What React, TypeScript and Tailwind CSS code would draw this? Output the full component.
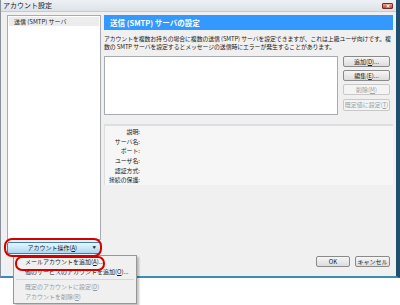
import React from "react";

const font = { fontFamily: '"Noto Sans CJK JP", "Noto Sans", sans-serif' };

function Btn({ children, disabled, className = "" }: { children: React.ReactNode; disabled?: boolean; className?: string }) {
  return (
    <div
      className={
        "flex items-center justify-center rounded-[2px] border text-[6px] leading-none " +
        (disabled
          ? "border-[#c8c8c8] bg-[#f4f4f4] text-[#a0a0a0] "
          : "border-[#8a8a8a] bg-gradient-to-b from-[#f6f6f6] to-[#dcdcdc] text-[#222] ") +
        className
      }
    >
      {children}
    </div>
  );
}

export default function App() {
  const labels = ["説明:", "サーバ名:", "ポート:", "ユーザ名:", "認証方式:", "接続の保護:"];
  return (
    <div className="relative h-[305px] w-[400px] overflow-hidden bg-white" style={font}>
      {/* window */}
      <div className="flex h-[278px] w-[400px] flex-col border-b-2 border-l border-r-4 border-b-[#3d8cb4] border-l-[#8a9099] border-r-[#1f4e6e] bg-[#f0f0f0]">
        {/* title bar */}
        <div className="flex h-[12px] shrink-0 items-center justify-between border-b border-[#c4cad1] bg-gradient-to-b from-[#eef1f4] to-[#dde2e8] pl-[2px] pr-[3px]">
          <span className="text-[7px] leading-none text-[#1a1a1a]">アカウント設定</span>
          <div className="flex h-[6px] w-[11px] items-center justify-center rounded-[1px] border border-[#7a2a20] bg-gradient-to-b from-[#e8a08c] to-[#c2442c] text-[5px] font-bold leading-none text-white">
            ✕
          </div>
        </div>
        {/* body */}
        <div className="flex flex-1 pl-[6px] pr-[3px] pt-[3px]">
          {/* left column */}
          <div className="flex w-[94px] flex-col">
            <div className="h-[225px] border border-[#a8acb2] bg-white p-px">
              <div className="flex h-[9px] items-center bg-[#ececec] pl-[5px] text-[6px] leading-none text-[#222]">
                送信 (SMTP) サーバ
              </div>
            </div>
            <div className="mt-[2px] flex h-[12px] items-center justify-between rounded-[2px] border border-[#3c7fb1] bg-gradient-to-b from-[#eaf6fd] to-[#a7d8f3] px-[4px] text-[6px] leading-none text-[#222]">
              <span className="flex-1 text-center">アカウント操作(<u>A</u>)</span>
              <span className="text-[3.5px]">▼</span>
            </div>
          </div>
          {/* right column */}
          <div className="ml-[3px] flex flex-1 flex-col">
            <div className="flex h-[15px] items-center bg-[#3399ff] pl-[6px] text-[7.5px] font-bold leading-none text-white">
              送信 (SMTP) サーバの設定
            </div>
            <div className="mt-[5px] whitespace-nowrap text-[5.9px] leading-[7.6px] tracking-[-0.1px] text-[#222]">
              アカウントを複数お持ちの場合に複数の送信 (SMTP) サーバを設定できますが、これは上級ユーザ向けです。複
              <br />
              数の SMTP サーバを設定するとメッセージの送信時にエラーが発生することがあります。
            </div>
            <div className="mt-[6px] flex">
              <div className="h-[59px] w-[234px] border border-[#a8acb2] bg-white" />
              <div className="ml-[5px] flex flex-col">
                <Btn className="h-[11px] w-[47px]">追加(<u>D</u>)...</Btn>
                <Btn className="mt-[3px] h-[11px] w-[47px]">編集(<u>E</u>)...</Btn>
                <Btn disabled className="mt-[3px] h-[11px] w-[47px]">削除(<u>M</u>)</Btn>
                <Btn disabled className="mt-[4px] h-[12px] w-[47px]">既定値に設定(<u>T</u>)</Btn>
              </div>
            </div>
            <div className="mt-[9px] flex h-[61px] w-[289px] flex-col border-l border-t-2 border-[#dedede] bg-[#f6f6f6] pt-[1px]">
              {labels.map((l) => (
                <div key={l} className="flex h-[10px] w-[35px] items-center justify-end text-[5.9px] leading-none text-[#222]">
                  {l}
                </div>
              ))}
            </div>
            <div className="mt-auto mb-[9px] flex justify-end gap-[5px] pr-[3px]">
              <Btn className="h-[11px] w-[34px]">OK</Btn>
              <Btn className="h-[11px] w-[35px]">キャンセル</Btn>
            </div>
          </div>
        </div>
      </div>

      {/* dropdown menu */}
      <div className="absolute left-[13px] top-[255px] w-[124px] border border-[#979797] bg-[#f0f0f0] py-px text-[6px] leading-none shadow-[2px_2px_2px_rgba(0,0,0,0.25)]">
        <div className="flex h-[10px] items-center pl-[11px] text-[#222]">メールアカウントを追加(<u>A</u>)...</div>
        <div className="flex h-[10px] items-center pl-[11px] text-[#222]">他のサービスのアカウントを追加(<u>O</u>)...</div>
        <div className="mx-[2px] my-[2px] border-t border-[#d7d7d7]" />
        <div className="flex h-[10px] items-center pl-[11px] text-[#9a9a9a]">既定のアカウントに設定(<u>D</u>)</div>
        <div className="flex h-[10px] items-center pl-[11px] text-[#9a9a9a]">アカウントを削除(<u>R</u>)</div>
      </div>

      {/* red annotation outlines */}
      <div className="absolute left-[4px] top-[238px] h-[19px] w-[98px] rounded-[8px] border-2 border-[#d40000]" />
      <div className="absolute left-[15px] top-[256px] h-[15px] w-[90px] rounded-[7px] border-2 border-[#d40000]" />
    </div>
  );
}
